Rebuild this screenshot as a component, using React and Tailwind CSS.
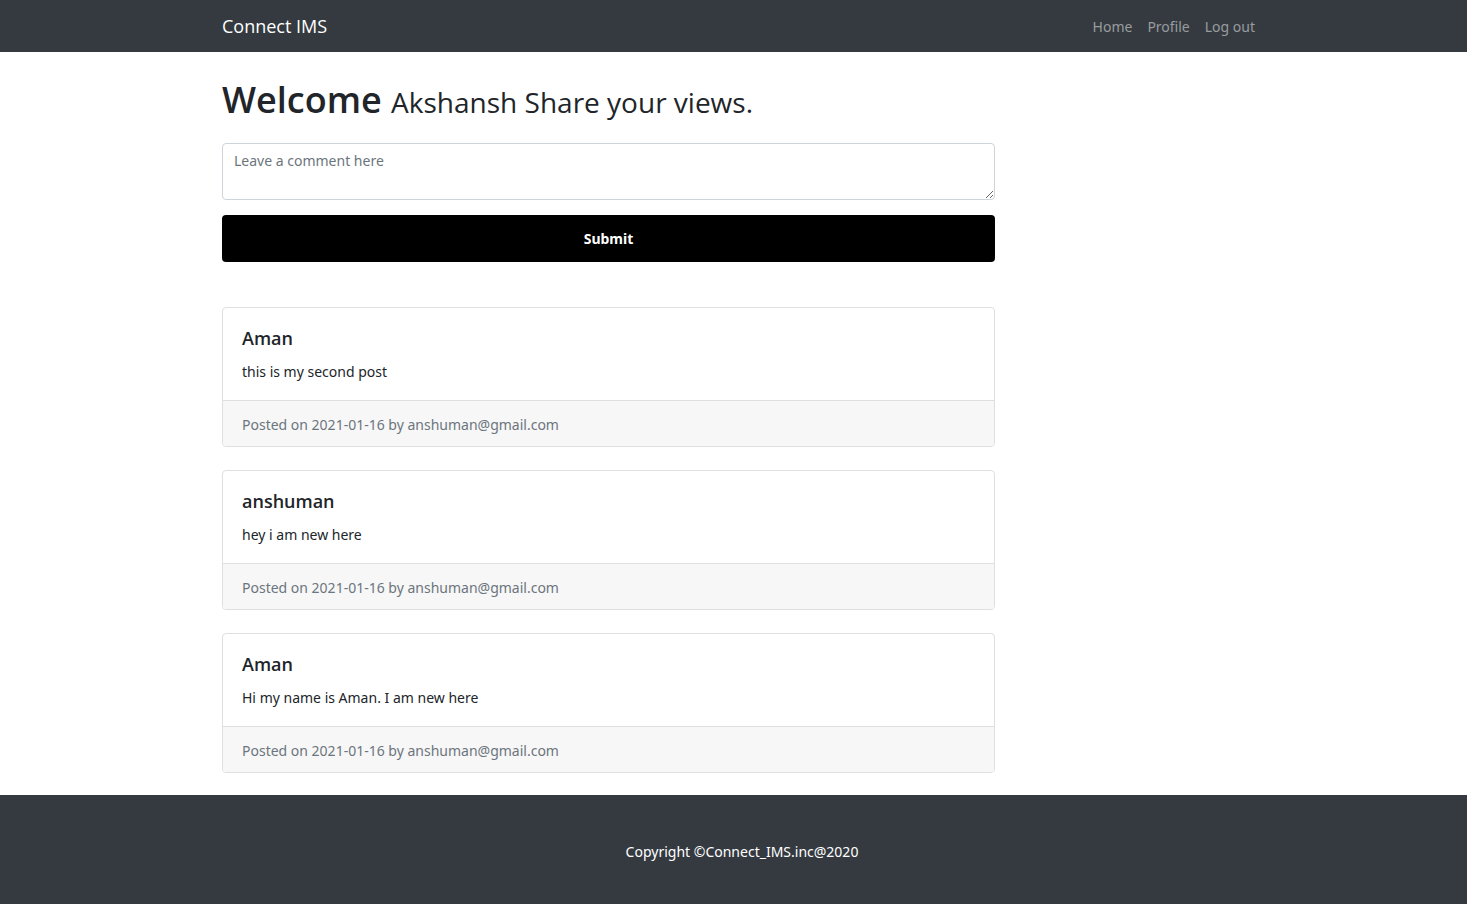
const posts = [
  { id: 3, author: "Aman", text: "this is my second post" },
  { id: 2, author: "anshuman", text: "hey i am new here" },
  { id: 1, author: "Aman", text: "Hi my name is Aman. I am new here" },
];

function Post({ author, text }) {
  return (
    <article className="overflow-hidden rounded-[4px] border border-[#dfdfdf]">
      <div className="px-[19px] pt-[19px] pb-[17px]">
        <h2 className="mb-3 font-['Open_Sans',sans-serif] text-[18px] leading-[22px] font-semibold">{author}</h2>
        <p className="leading-[22px]">{text}</p>
      </div>
      <div className="border-t border-[#dfdfdf] bg-[#f7f7f7] px-[19px] pt-3 pb-[10px] leading-[23px] text-[#6c757d]">
        Posted on 2021-01-16 by anshuman@gmail.com
      </div>
    </article>
  );
}

export default function App() {
  return (
    <div className="flex min-h-screen flex-col bg-white font-['Noto_Sans','Open_Sans',sans-serif] text-[14px] text-[#212529]">
      <header className="bg-[#343a40] pl-[10px]">
        <nav className="mx-auto flex h-[52px] max-w-[1067px] items-center justify-between px-[17px]">
          <a href="#home" className="font-['Open_Sans',sans-serif] text-[18px] text-white">Connect IMS</a>
          <div className="flex gap-[15px] text-[#999c9f]">
            <a href="#home">Home</a>
            <a href="#profile">Profile</a>
            <a href="#logout">Log out</a>
          </div>
        </nav>
      </header>
      <main className="grow pb-[22px] pl-[10px]">
        <div className="mx-auto max-w-[1067px] px-[17px]">
          <div className="w-3/4 max-w-[773px]">
            <h1 className="pt-6 font-['Open_Sans',sans-serif] text-[36px] leading-[48px] font-semibold">
              Welcome <small className="text-[28px] font-normal">Akshansh Share your views.</small>
            </h1>
            <form className="mt-[17px]" onSubmit={(e) => e.preventDefault()}>
              <textarea
                aria-label="Comment"
                placeholder="Leave a comment here"
                className="block h-[57px] w-full rounded-[4px] border border-[#ced4da] px-[11px] py-[6px] leading-[22px] placeholder:text-[#6c757d]"
              />
              <button type="submit" className="mt-[15px] h-[47px] w-full rounded-[4px] bg-black font-bold text-white">
                Submit
              </button>
            </form>
            <section className="mt-[45px] flex flex-col gap-[23px]">
              {posts.map((p) => (
                <Post key={p.id} author={p.author} text={p.text} />
              ))}
            </section>
          </div>
        </div>
      </main>
      <footer className="bg-[#343a40] pt-[45px] pb-[41px] pl-[17px] text-center leading-[23px] text-white">
        Copyright ©Connect_IMS.inc@2020
      </footer>
    </div>
  );
}
